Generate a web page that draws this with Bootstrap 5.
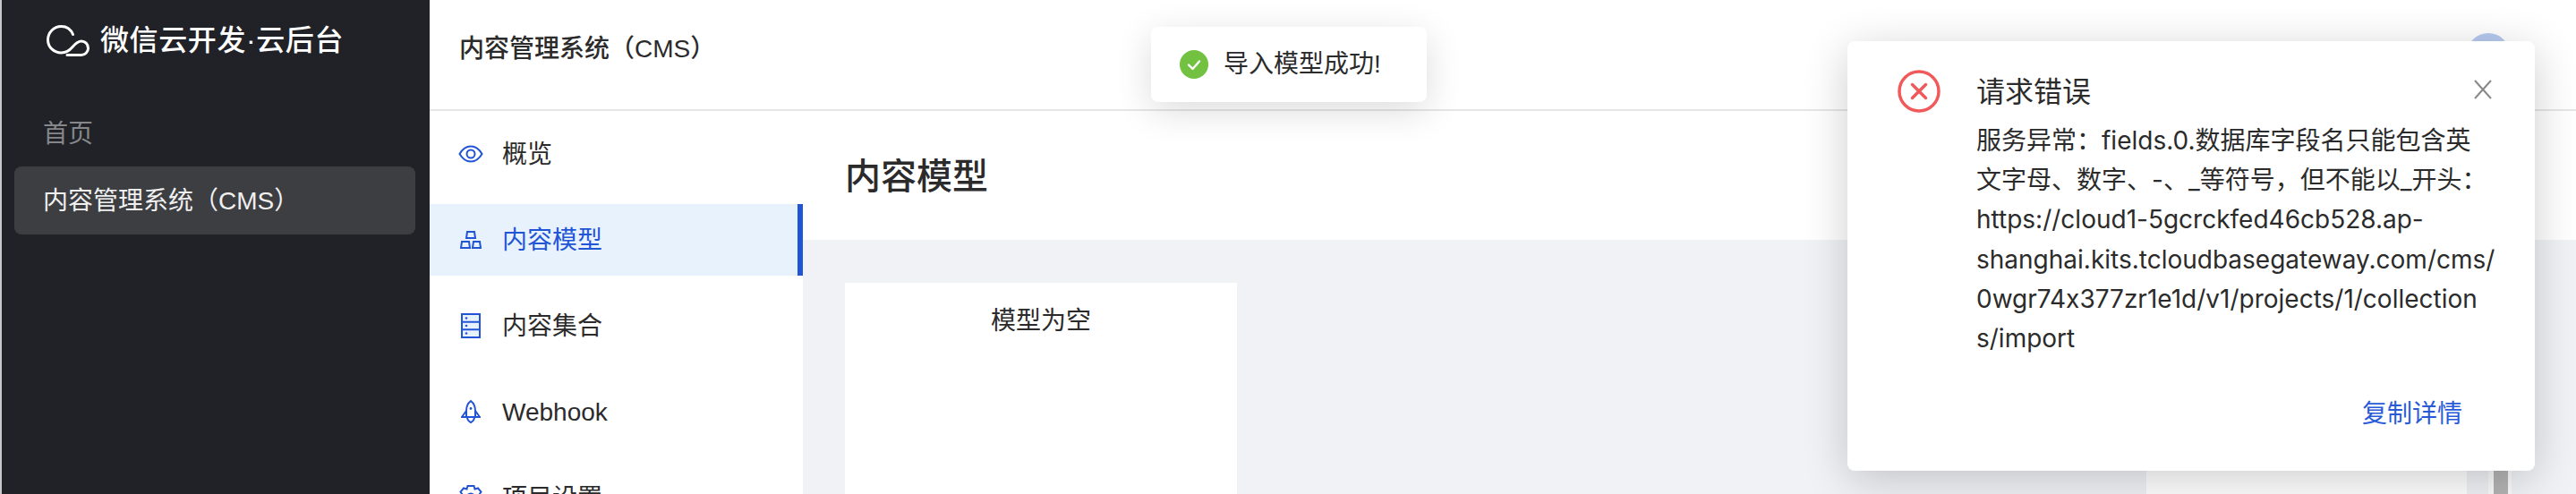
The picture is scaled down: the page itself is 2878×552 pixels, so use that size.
<!DOCTYPE html>
<html lang="zh-CN">
<head>
    <meta charset="UTF-8">
    <title>内容模型</title>
    <link href="https://cdn.jsdelivr.net/npm/bootstrap@5.3.3/dist/css/bootstrap.min.css" rel="stylesheet">
    <style>
        html, body { height: 100%; overflow: hidden; }
        body { font-family: "Liberation Sans", "Noto Sans CJK SC", sans-serif; font-size: 28px; color: #2b2b2b; background: #fff; }
        .app-shell { height: 552px; }
        .side-dark { width: 480px; flex: none; background: #212227; border-left: 2px solid #c8c8c8; color: #f0f0f0; padding: 0 16px 0 14px; }
        .brand-row { height: 90px; padding-left: 36px; padding-top: 28px; gap: 12px; font-size: 32px; font-weight: 500; color: #fff; line-height: 35px; letter-spacing: .6px; }
        .brand-row svg { flex: none; }
        .side-group { height: 44px; line-height: 44px; margin-top: 38px; padding-left: 32px; color: #85878a; }
        .side-item { height: 76px; line-height: 78px; margin-top: 14px; padding-left: 32px; background: #3d3e42; border-radius: 8px; color: #f0f0f0; }
        .top-head { height: 124px; flex: none; border-bottom: 2px solid #e6e6e6; padding: 0 74px 0 33px; }
        .top-title { font-size: 28px; font-weight: 500; margin-bottom: 13px; }
        .avatar-dot { width: 48px; height: 48px; border-radius: 50%; background: #b7c9f0; }
        .sub-nav { width: 417px; flex: none; padding-top: 8px; }
        .sub-nav .nav-link { height: 80px; flex: none; margin-bottom: 16px; padding: 2px 0 0 32px; color: #2b2b2b; display: flex; align-items: center; }
        .sub-nav .nav-link.active { background: #e8f2fd; color: #2254d6; border-right: 6px solid #2254d6; }
        .nav-ic { width: 49px; flex: none; display: flex; justify-content: center; padding-right: 21px; margin-top: -2px; }
        .nav-ic svg { flex: none; }
        .page-title { height: 144px; flex: none; padding-left: 47px; font-size: 40px; font-weight: 500; line-height: 146px; }
        .page-body { background: #f0f2f6; padding: 48px 0 0 47px; }
        .panel-white { background: #fff; height: 400px; text-align: center; padding-top: 21px; line-height: 44px; }
        .panel-a { width: 438px; }
        .panel-b { width: 358px; margin-left: 1016px; }
        .scroll-track { width: 26px; height: 400px; margin-left: 24px; background: #fbfbfb; padding: 0 4px 0 6px; }
        .scroll-thumb { height: 100%; background: #b4b4b4; }
        .toast-ok { position: absolute; left: 1286px; top: 30px; width: 308px; height: 84px; background: #fff; border-radius: 8px; box-shadow: 0 10px 40px rgba(0, 0, 0, .14); padding-left: 32px; gap: 17px; }
        .notice-err { position: absolute; left: 2064px; top: 46px; width: 768px; height: 480px; background: #fff; border-radius: 8px; box-shadow: 0 10px 50px rgba(0, 0, 0, .2); padding: 32px 48px 0 56px; gap: 40px; }
        .notice-err > svg { flex: none; }
        .notice-main { width: 576px; }
        .notice-title { font-size: 32px; line-height: 44px; margin-top: 3px; }
        .notice-text { font-family: Inter, "Noto Sans CJK SC", sans-serif; font-feature-settings: "calt" 0; line-height: 44.2px; margin-top: 10px; white-space: nowrap; }
        .notice-link { color: #2a5bd7; line-height: 44px; margin-top: 41px; margin-right: 33px; text-align: right; }
        .notice-close { position: absolute; left: 700px; top: 43px; }
    </style>
</head>
<body>
    <div class="app-shell d-flex">
        <aside class="side-dark">
            <div class="brand-row d-flex">
                <svg width="48" height="35" viewBox="0 0 48 35" fill="none" stroke="#fff" stroke-width="3" stroke-linecap="round"><path d="M29.5 10.5C27 4.5 22 1.5 16.5 1.5C8 1.5 1.5 8.5 1.5 16.5C1.5 25 8.5 31 16.5 31C22 31 26 28 29 24.5C32 21 35 18 39 18C43 18 46.5 21 46.5 26C46.5 30 43 33.5 39 33.5L23 33.5"/></svg>
                <span>微信云开发·云后台</span>
            </div>
            <div class="side-group">首页</div>
            <div class="side-item">内容管理系统（CMS）</div>
        </aside>

        <div class="flex-grow-1 d-flex flex-column">
            <header class="top-head d-flex align-items-center justify-content-between">
                <div class="top-title">内容管理系统（CMS）</div>
                <div class="avatar-dot"></div>
            </header>
            <div class="d-flex flex-grow-1 overflow-hidden">
                <nav class="sub-nav nav flex-column flex-nowrap">
                    <a class="nav-link" href="#">
                        <span class="nav-ic"><svg width="28" height="20" viewBox="0 0 28 20" fill="none" stroke="#2254d6" stroke-width="2"><path d="M1.5 10C5 4 9 1.5 14 1.5S23 4 26.5 10C23 16 19 18.5 14 18.5S5 16 1.5 10Z"/><circle cx="14" cy="10" r="4.5"/></svg></span>概览
                    </a>
                    <a class="nav-link active" href="#">
                        <span class="nav-ic"><svg width="24" height="20" viewBox="0 0 24 20" fill="none" stroke="#2254d6" stroke-width="2"><path d="M8 1H16L17 8H7Z"/><path d="M2 12H10L11 19H1Z"/><path d="M15 12H22L23 19H14Z"/></svg></span>内容模型
                    </a>
                    <a class="nav-link" href="#">
                        <span class="nav-ic"><svg width="22" height="28" viewBox="0 0 22 28" fill="#e8f2fd" stroke="#2254d6" stroke-width="2"><rect x="1" y="1" width="20" height="26"/><path d="M1 9.7H21M1 18.3H21"/><g fill="#2254d6" stroke="none"><circle cx="6" cy="5.5" r="1.3"/><circle cx="6" cy="14" r="1.3"/><circle cx="6" cy="22.5" r="1.3"/></g></svg></span>内容集合
                    </a>
                    <a class="nav-link" href="#">
                        <span class="nav-ic"><svg width="22" height="26" viewBox="0 0 22 26" fill="none" stroke="#2254d6" stroke-width="2"><path d="M11 1C7 4 6 8 6 12V19H16V12C16 8 15 4 11 1Z"/><path d="M6 12L1 19H6M16 12L21 19H16"/><path d="M7 19C7 22 9 24 11 25C13 24 15 22 15 19"/><circle cx="11" cy="9.5" r="1.4" fill="#2254d6" stroke="none"/></svg></span>Webhook
                    </a>
                    <a class="nav-link" href="#">
                        <span class="nav-ic"><svg width="28" height="28" viewBox="0 0 28 28" fill="none" stroke="#2254d6" stroke-width="2"><path d="M10.5 1H17.5L18.5 4.5L22 3.5L25.5 7.5L23.5 10.5L27 14L23.5 17.5L25.5 20.5L22 24.5L18.5 23.5L17.5 27H10.5L9.5 23.5L6 24.5L2.5 20.5L4.5 17.5L1 14L4.5 10.5L2.5 7.5L6 3.5L9.5 4.5Z"/><circle cx="14" cy="14" r="4.5"/></svg></span>项目设置
                    </a>
                </nav>
                <main class="flex-grow-1 d-flex flex-column">
                    <div class="page-title">内容模型</div>
                    <div class="page-body flex-grow-1 d-flex">
                        <div class="panel-white panel-a">模型为空</div>
                        <div class="panel-white panel-b"></div>
                        <div class="scroll-track"><div class="scroll-thumb"></div></div>
                    </div>
                </main>
            </div>
        </div>
    </div>

    <div class="toast-ok d-flex align-items-center">
        <svg width="32" height="32" viewBox="0 0 32 32"><circle cx="16" cy="16" r="16" fill="#72c140"/><path d="M10 16.5L14.5 21L22 12.5" fill="none" stroke="#fff" stroke-width="2.4" stroke-linecap="round" stroke-linejoin="round"/></svg>
        <span>导入模型成功!</span>
    </div>

    <div class="notice-err d-flex">
        <svg width="48" height="48" viewBox="0 0 48 48" fill="none" stroke="#f05a5a" stroke-width="3.5"><circle cx="24" cy="24" r="22"/><path d="M16.5 16.5L31.5 31.5M31.5 16.5L16.5 31.5" stroke-linecap="round"/></svg>
        <div class="notice-main">
            <div class="notice-title">请求错误</div>
            <div class="notice-text">服务异常：fields.0.数据库字段名只能包含英<br>文字母、数字、-、_等符号，但不能以_开头：<br>https://cloud1-5gcrckfed46cb528.ap-<br>shanghai.kits.tcloudbasegateway.com/cms/<br>0wgr74x377zr1e1d/v1/projects/1/collection<br>s/import</div>
            <div class="notice-link">复制详情</div>
        </div>
        <svg class="notice-close" width="20" height="22" viewBox="0 0 20 22" fill="none" stroke="#888" stroke-width="2"><path d="M1 1L19 21M19 1L1 21"/></svg>
    </div>

    <script src="https://cdn.jsdelivr.net/npm/bootstrap@5.3.3/dist/js/bootstrap.bundle.min.js"></script>
</body>
</html>
